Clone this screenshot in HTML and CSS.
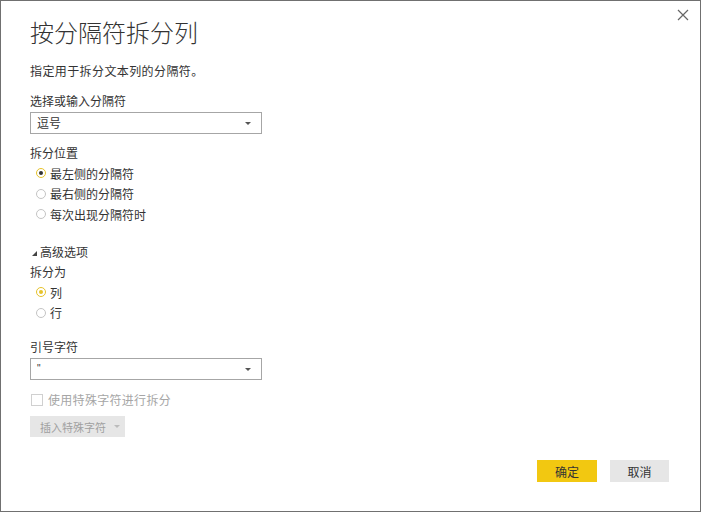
FILE: index.html
```html
<!DOCTYPE html>
<html lang="zh-CN">
<head>
<meta charset="utf-8">
<title>按分隔符拆分列</title>
<link rel="stylesheet" href="styles.css">
</head>
<body>
<div class="dialog">
  <button class="close" aria-label="关闭">
    <svg width="12" height="12" viewBox="0 0 12 12"><path d="M1 1L11 11M11 1L1 11" stroke="#666" stroke-width="1.2" fill="none"/></svg>
  </button>
  <h1 class="title">按分隔符拆分列</h1>
  <p class="desc">指定用于拆分文本列的分隔符。</p>

  <div class="label l-sep">选择或输入分隔符</div>
  <div class="select"><span>逗号</span><i class="caret"></i></div>

  <div class="label l-pos">拆分位置</div>
  <div class="radios">
    <div class="radio"><span class="dot on dark"></span>最左侧的分隔符</div>
    <div class="radio"><span class="dot"></span>最右侧的分隔符</div>
    <div class="radio"><span class="dot"></span>每次出现分隔符时</div>
  </div>

  <div class="adv"><i class="tri"></i>高级选项</div>
  <div class="label">拆分为</div>
  <div class="radios">
    <div class="radio"><span class="dot on gold"></span>列</div>
    <div class="radio"><span class="dot"></span>行</div>
  </div>

  <div class="label l-quote">引号字符</div>
  <div class="select"><span class="quote">"</span><i class="caret"></i></div>

  <div class="check"><span class="box"></span>使用特殊字符进行拆分</div>
  <div class="insert">插入特殊字符<i class="caret light"></i></div>

  <div class="footer">
    <button class="btn primary">确定</button>
    <button class="btn cancel">取消</button>
  </div>
</div>
</body>
</html>
```

FILE: styles.css
```css
* { box-sizing: border-box; }
html, body { margin: 0; padding: 0; background: #fff; }
body {
  font-family: "Noto Sans CJK SC", "Liberation Sans", sans-serif;
  font-size: 12px;
  color: #333;
}
.dialog {
  position: relative;
  width: 701px;
  height: 512px;
  border: 1px solid #707070;
  padding: 15px 31px 0 29px;
  display: flex;
  flex-direction: column;
  align-items: flex-start;
}
.close {
  position: absolute;
  top: 7px;
  right: 10px;
  width: 14px;
  height: 14px;
  padding: 0;
  border: 0;
  background: none;
  display: flex;
  align-items: center;
  justify-content: center;
}
.title {
  margin: 0;
  font-size: 24px;
  font-weight: 300;
  line-height: 32px;
  color: #333;
}
.desc {
  margin: 13px 0 0;
  line-height: 20px;
  letter-spacing: 0.4px;
}
.label { line-height: 20px; }
.l-sep { margin-top: 10px; }
.l-pos { margin-top: 9px; }
.l-quote { margin-top: 14px; }
.select {
  margin-top: 1px;
  width: 232px;
  height: 22px;
  border: 1px solid #a6a6a6;
  padding: 0 6px;
  display: flex;
  align-items: center;
  justify-content: space-between;
  line-height: 20px;
}
.quote { color: #333; font-family: "Liberation Sans", sans-serif; font-size: 10px; }
.caret {
  width: 0;
  height: 0;
  border-left: 3px solid transparent;
  border-right: 3px solid transparent;
  border-top: 3px solid #555;
  margin-right: 4px;
}
.caret.light { border-top-color: #bbb; margin: 0 0 0 8px; }
.radios { display: flex; flex-direction: column; }
.radio {
  height: 20.5px;
  display: flex;
  align-items: center;
  padding-left: 6px;
}
.dot {
  width: 10px;
  height: 10px;
  border: 1px solid #c4c4c4;
  border-radius: 50%;
  margin-right: 4px;
  display: flex;
  align-items: center;
  justify-content: center;
}
.dot.on { border-color: #e6c229; }
.dot.on::after {
  content: "";
  width: 4px;
  height: 4px;
  border-radius: 50%;
}
.dot.dark::after { background: #333; }
.dot.gold::after { background: #e6c229; }
.adv {
  margin-top: 17.5px;
  line-height: 20px;
  display: flex;
  align-items: center;
}
.tri {
  width: 0;
  height: 0;
  border-left: 5px solid transparent;
  border-bottom: 5px solid #444;
  margin: 2px 3px 0 2px;
}
.check {
  margin-top: 10px;
  line-height: 20px;
  display: flex;
  align-items: center;
  color: #a6a6a6;
  letter-spacing: 0.3px;
}
.box {
  width: 12px;
  height: 12px;
  border: 1px solid #d0d0d0;
  margin: 0 5px 0 1px;
}
.insert {
  margin-top: 6px;
  width: 95px;
  height: 21px;
  background: #e6e6e6;
  color: #a0a0a0;
  display: flex;
  align-items: center;
  padding-left: 10px;
  white-space: nowrap;
  font-size: 11px;
}
.footer {
  margin-top: 23px;
  align-self: stretch;
  display: flex;
  justify-content: flex-end;
  gap: 13px;
}
.btn {
  width: 60px;
  height: 22px;
  border: 0;
  padding: 0;
  background: #e6e6e6;
  font: inherit;
  color: #333;
}
.btn.cancel { width: 59px; }
.btn.primary { background: #f2c811; }
```
